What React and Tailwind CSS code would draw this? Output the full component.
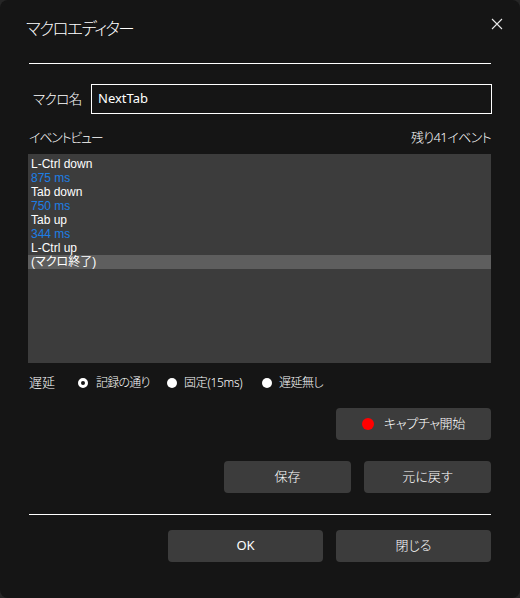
import React from "react";

const F = { fontFamily: '"Noto Sans", "Noto Sans CJK JP", sans-serif', fontFeatureSettings: '"palt"' };
const L = { fontFamily: '"Liberation Sans", "Noto Sans CJK JP", sans-serif', fontFeatureSettings: '"palt"' };

function Radio({ checked }) {
  return checked ? (
    <span className="block w-[10px] h-[10px] rounded-full border-[3px] border-white bg-[#151515] shrink-0" />
  ) : (
    <span className="block w-[10px] h-[10px] rounded-full bg-white shrink-0" />
  );
}

function Btn({ w, children, className = "" }) {
  return (
    <div className={`${w} h-[32px] rounded-[4px] bg-[#3c3c3c] flex items-center justify-center text-[13px] text-white ${className}`}>
      {children}
    </div>
  );
}

export default function App() {
  const rows = [
    { t: "L-Ctrl down" },
    { t: "875 ms", b: true },
    { t: "Tab down" },
    { t: "750 ms", b: true },
    { t: "Tab up" },
    { t: "344 ms", b: true },
    { t: "L-Ctrl up" },
    { t: "(マクロ終了)", sel: true },
  ];
  return (
    <div className="w-[520px] h-[598px] bg-[#262626]">
      <div className="w-[520px] h-[598px] bg-[#151515] rounded-[8px] flex flex-col text-white font-light" style={F}>
        <div className="flex items-start justify-between pl-[26px] pr-[17px] pt-[18px]">
          <div className="text-[16.5px] leading-[22px] tracking-[-1.5px]">マクロエディター</div>
          <svg width="12" height="12" viewBox="0 0 12 12">
            <path d="M1 1 L11 11 M11 1 L1 11" stroke="#e8e8e8" strokeWidth="1.1" />
          </svg>
        </div>
        <div className="mx-[29px] mt-[23px] h-px bg-white" />
        <div className="flex items-center mt-[20px] pl-[33px] pr-[28px]">
          <div className="w-[58px] text-[13.5px] leading-[20px] tracking-[-0.5px]">マクロ名</div>
          <div className="flex-1 h-[30px] border border-white flex items-center pl-[6px] text-[13px] font-normal">NextTab</div>
        </div>
        <div className="flex justify-between mt-[14px] pl-[29px] pr-[29px] text-[13px] leading-[18px]">
          <span className="tracking-[-1.2px]">イベントビュー</span>
          <span className="tracking-[-0.6px]">残り41イベント</span>
        </div>
        <div className="ml-[28px] w-[463px] h-[209px] mt-[8px] bg-[#3c3c3c] pt-[3px] font-normal" style={L}>
          {rows.map((r, i) => (
            <div
              key={i}
              className={`h-[14px] leading-[14px] text-[12px] pl-[3px] ${r.b ? "text-[#1c7fe6]" : "text-white"} ${r.sel ? "bg-[#5e5e5e]" : ""}`}
            >
              {r.t}
            </div>
          ))}
        </div>
        <div className="flex items-center mt-[10px] pl-[29px] h-[20px] text-[12px]">
          <span className="w-[49px] text-[13px]">遅延</span>
          <div className="w-[89px] flex items-center">
            <Radio checked />
            <span className="ml-[8px] tracking-[-0.8px]">記録の通り</span>
          </div>
          <div className="w-[95px] flex items-center">
            <Radio />
            <span className="ml-[7px] tracking-[-0.3px]">固定(15ms)</span>
          </div>
          <div className="flex items-center">
            <Radio />
            <span className="ml-[7px] tracking-[-0.5px]">遅延無し</span>
          </div>
        </div>
        <div className="flex justify-end pr-[29px] mt-[15px]">
          <Btn w="w-[155px]" className="gap-[10px]">
            <span className="block w-[12px] h-[12px] rounded-full bg-[#ff0000]" />
            <span className="text-[13px] tracking-[-0.3px]">キャプチャ開始</span>
          </Btn>
        </div>
        <div className="flex justify-end pr-[29px] mt-[21px] gap-[13px]">
          <Btn w="w-[127px]">保存</Btn>
          <Btn w="w-[127px]">元に戻す</Btn>
        </div>
        <div className="mx-[29px] mt-[21px] h-px bg-white" />
        <div className="flex justify-end pr-[29px] mt-[15px] gap-[13px]">
          <Btn w="w-[155px]" className="font-normal">OK</Btn>
          <Btn w="w-[155px]">閉じる</Btn>
        </div>
      </div>
    </div>
  );
}
